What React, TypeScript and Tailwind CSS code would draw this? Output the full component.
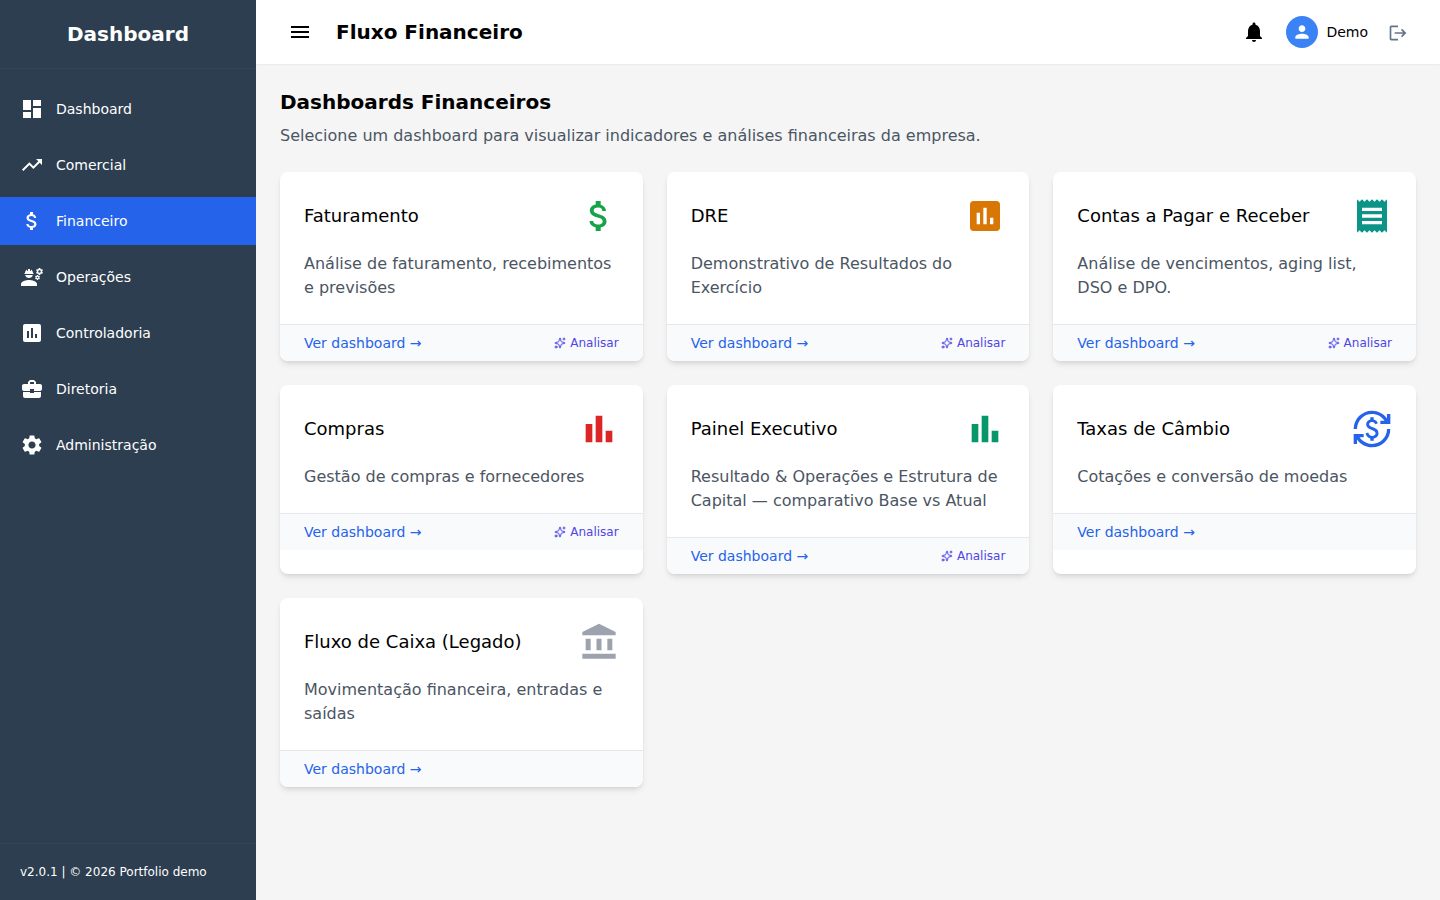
import type { ReactNode } from 'react'
import type { IconType } from 'react-icons'
import {
  MdAssessment,
  MdAttachMoney,
  MdBusinessCenter,
  MdCurrencyExchange,
  MdDashboard,
  MdEngineering,
  MdMenu,
  MdNotifications,
  MdPerson,
  MdReceipt,
  MdSettings,
  MdTrendingUp,
} from 'react-icons/md'
import { Sparkles } from 'lucide-react'

type IconProps = { className?: string }

function Svg({ className, children }: IconProps & { children: ReactNode }) {
  return (
    <svg className={className} viewBox="0 0 24 24" fill="currentColor" aria-hidden="true">
      {children}
    </svg>
  )
}

function BarChartIcon({ className }: IconProps) {
  return (
    <Svg className={className}>
      <path d="M4 9h4v11H4zm12 4h4v7h-4zm-6-9h4v16h-4z" />
    </Svg>
  )
}

function BankIcon({ className }: IconProps) {
  return (
    <Svg className={className}>
      <path d="M4 10h3v7H4zm6.5 0h3v7h-3zM2 19h20v3H2zm15-9h3v7h-3zm-5-9L2 6v2h20V6z" />
    </Svg>
  )
}

function LogoutIcon({ className }: IconProps) {
  return (
    <Svg className={className}>
      <path d="m17 7-1.41 1.41L18.17 11H8v2h10.17l-2.58 2.58L17 17l5-5zM4 5h8V3H4c-1.1 0-2 .9-2 2v14c0 1.1.9 2 2 2h8v-2H4z" />
    </Svg>
  )
}

const navItems: { label: string; icon: IconType }[] = [
  { label: 'Dashboard', icon: MdDashboard },
  { label: 'Comercial', icon: MdTrendingUp },
  { label: 'Financeiro', icon: MdAttachMoney },
  { label: 'Operações', icon: MdEngineering },
  { label: 'Controladoria', icon: MdAssessment },
  { label: 'Diretoria', icon: MdBusinessCenter },
  { label: 'Administração', icon: MdSettings },
]

type DashboardCard = {
  title: string
  description: string
  icon: (props: IconProps) => ReactNode
  color: string
  analyze?: boolean
}

const cards: DashboardCard[] = [
  {
    title: 'Faturamento',
    description: 'Análise de faturamento, recebimentos e previsões',
    icon: MdAttachMoney,
    color: 'text-[#16a34a]',
    analyze: true,
  },
  {
    title: 'DRE',
    description: 'Demonstrativo de Resultados do Exercício',
    icon: MdAssessment,
    color: 'text-[#d97706]',
    analyze: true,
  },
  {
    title: 'Contas a Pagar e Receber',
    description: 'Análise de vencimentos, aging list, DSO e DPO.',
    icon: MdReceipt,
    color: 'text-[#0d9488]',
    analyze: true,
  },
  {
    title: 'Compras',
    description: 'Gestão de compras e fornecedores',
    icon: BarChartIcon,
    color: 'text-[#dc2626]',
    analyze: true,
  },
  {
    title: 'Painel Executivo',
    description: 'Resultado & Operações e Estrutura de Capital — comparativo Base vs Atual',
    icon: BarChartIcon,
    color: 'text-[#059669]',
    analyze: true,
  },
  {
    title: 'Taxas de Câmbio',
    description: 'Cotações e conversão de moedas',
    icon: MdCurrencyExchange,
    color: 'text-[#2563eb]',
  },
  {
    title: 'Fluxo de Caixa (Legado)',
    description: 'Movimentação financeira, entradas e saídas',
    icon: BankIcon,
    color: 'text-[#9ca3af]',
  },
]

function Sidebar() {
  return (
    <aside className="flex w-64 shrink-0 flex-col bg-[#2c3e50] text-white">
      <div className="border-b border-[#3f4052] p-5 text-center text-xl font-bold">Dashboard</div>
      <nav className="flex flex-1 flex-col gap-2 pt-4">
        {navItems.map(({ label, icon: Icon }) => (
          <a
            key={label}
            href="#"
            className={`flex h-12 items-center gap-3 px-5 text-sm ${label === 'Financeiro' ? 'bg-[#2563eb]' : ''}`}
          >
            <Icon className="size-6" />
            <span>{label}</span>
          </a>
        ))}
      </nav>
      <div className="border-t border-[#3f4052] p-5 text-xs">v2.0.1 | © 2026 Portfolio demo</div>
    </aside>
  )
}

function Header() {
  return (
    <header className="z-10 flex h-16 shrink-0 items-center bg-white px-6 shadow-xs">
      <button className="p-2">
        <MdMenu className="size-6" />
      </button>
      <h1 className="ml-4 text-xl font-bold">Fluxo Financeiro</h1>
      <div className="ml-auto flex items-center">
        <button>
          <MdNotifications className="size-6" />
        </button>
        <div className="ml-5 flex items-center gap-2">
          <div className="flex size-8 items-center justify-center rounded-full bg-[#3b82f6] text-white">
            <MdPerson className="size-5" />
          </div>
          <span className="text-sm">Demo</span>
        </div>
        <button className="ml-3 px-2 pt-0.5 text-[#64748b]">
          <LogoutIcon className="size-5" />
        </button>
      </div>
    </header>
  )
}

function Card({ title, description, icon: Icon, color, analyze }: DashboardCard) {
  return (
    <div className="overflow-hidden rounded-lg bg-white shadow-md">
      <div className="p-6">
        <div className="flex items-center justify-between">
          <h3 className="text-lg">{title}</h3>
          <Icon className={`size-10 ${color}`} />
        </div>
        <p className="mt-4 text-[#4b5563]">{description}</p>
      </div>
      <div className="flex items-center justify-between border-t border-[#e5e7eb] bg-[#f8fafc] px-6 py-2">
        <a href="#" className="text-sm text-[#2563eb]">
          Ver dashboard →
        </a>
        {analyze && (
          <button className="flex items-center gap-1 text-xs text-[#4f46e5]">
            <Sparkles className="size-3" />
            Analisar
          </button>
        )}
      </div>
    </div>
  )
}

export default function App() {
  return (
    <div className="flex h-screen overflow-hidden bg-[#f5f5f5] font-['DejaVu_Sans',sans-serif] text-black">
      <Sidebar />
      <div className="flex flex-1 flex-col">
        <Header />
        <main className="flex-1 p-6">
          <h2 className="text-xl font-bold">Dashboards Financeiros</h2>
          <p className="mt-2 text-[#4b5563]">
            Selecione um dashboard para visualizar indicadores e análises financeiras da empresa.
          </p>
          <div className="mt-6 grid grid-cols-3 gap-6">
            {cards.map((card) => (
              <Card key={card.title} {...card} />
            ))}
          </div>
        </main>
      </div>
    </div>
  )
}
